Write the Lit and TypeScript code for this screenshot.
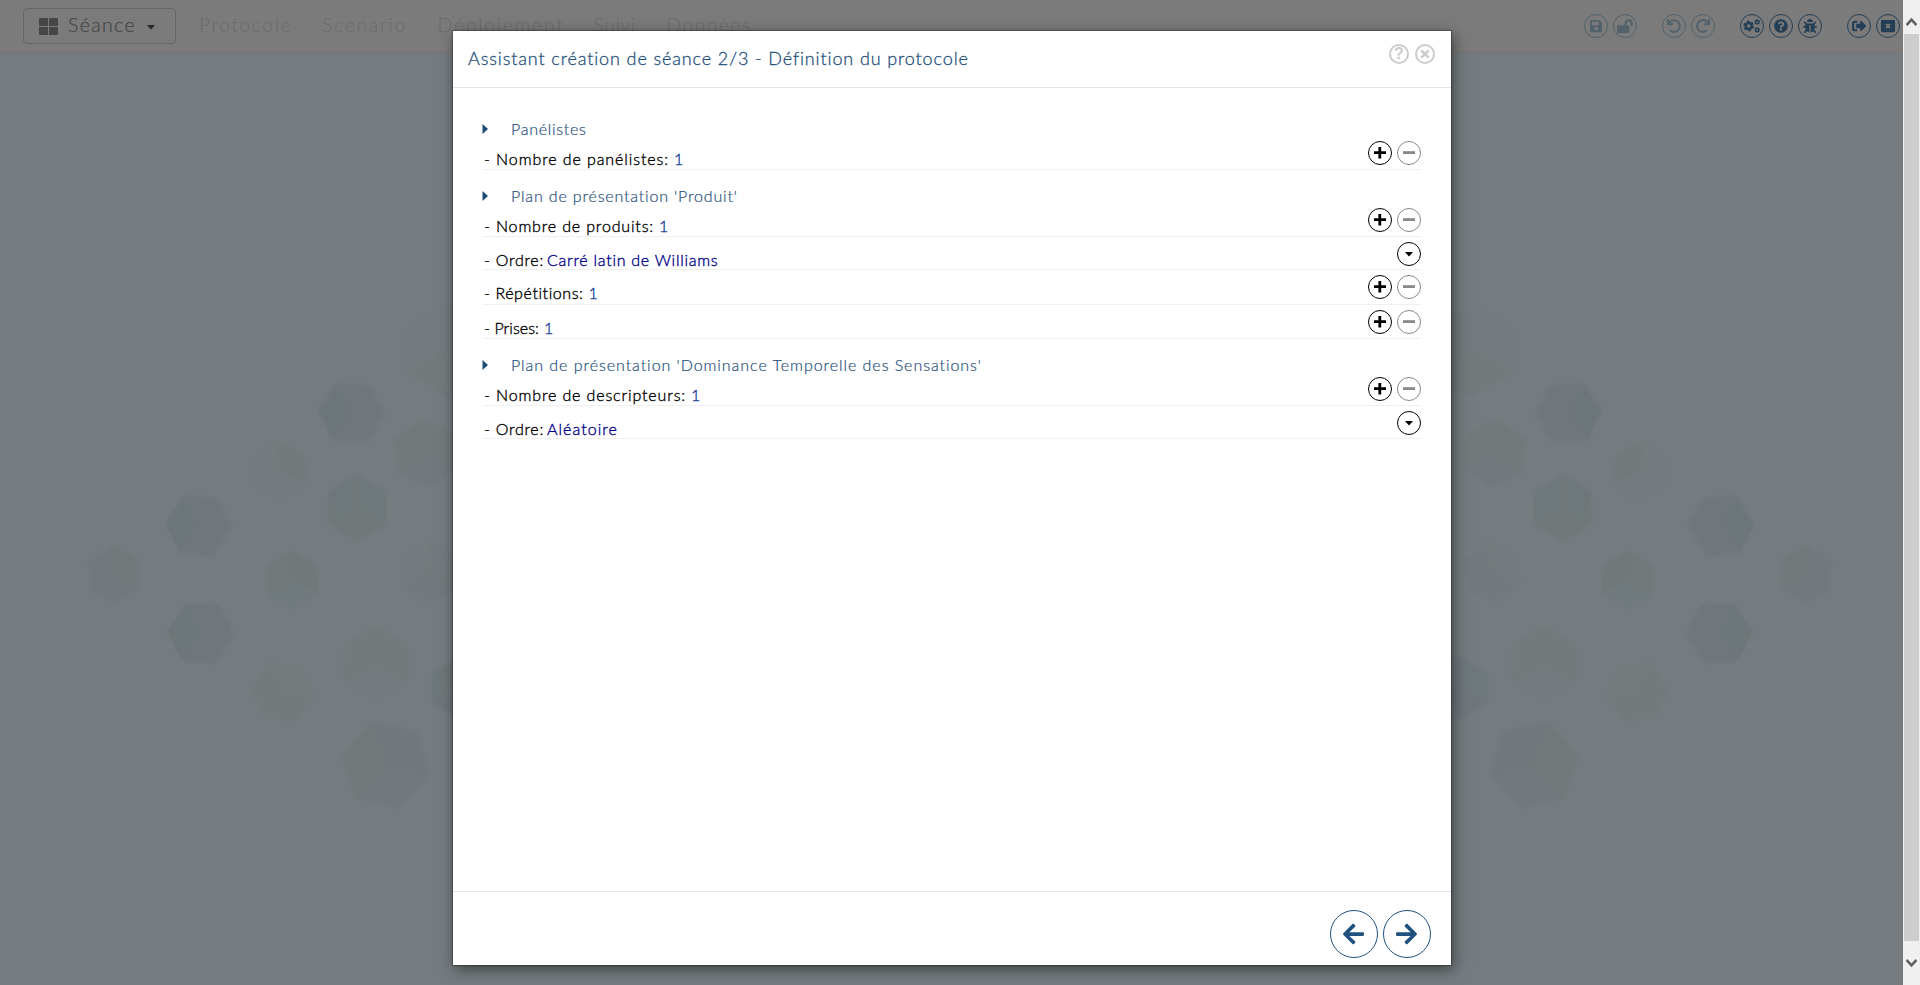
import { LitElement, html, svg, css } from "lit";
import { customElement } from "lit/decorators.js";
import { styleMap } from "lit/directives/style-map.js";

const FAMILY = '"Century Gothic", Lato, "Liberation Sans", sans-serif';
const pen = document.createElement("canvas").getContext("2d")!;

/** Letter spacing that makes a label take the given width. */
function tracked(text: string, size: number, width: number, weight = 400) {
  pen.font = `${weight} ${size}px ${FAMILY}`;
  const spacing = (width - pen.measureText(text).width) / text.length;
  return styleMap({ letterSpacing: `${spacing.toFixed(3)}px` });
}

const fa = (d: string, w = 512) => svg`<svg class="fa" viewBox="0 0 ${w} 512"><path fill="currentColor" d=${d}/></svg>`;

const UNDO = "M212.333 224.333H12c-6.627 0-12-5.373-12-12V12C0 5.373 5.373 0 12 0h48c6.627 0 12 5.373 12 12v78.112C117.773 39.279 184.26 7.47 258.175 8.007c136.906.994 246.448 111.623 246.157 248.532C504.041 393.258 393.12 504 256.333 504c-64.089 0-122.496-24.313-166.51-64.215-5.099-4.622-5.334-12.554-.467-17.42l33.967-33.967c4.474-4.474 11.662-4.717 16.401-.525C170.76 415.336 211.58 432 256.333 432c97.268 0 176-78.716 176-176 0-97.267-78.716-176-176-176-58.496 0-110.28 28.476-142.274 72.333h98.274c6.627 0 12 5.373 12 12v48c0 6.627-5.373 12-12 12z";
const ARROW = "M257.5 445.1l-22.2 22.2c-9.4 9.4-24.6 9.4-33.9 0L7 273c-9.4-9.4-9.4-24.6 0-33.9L201.4 44.7c9.4-9.4 24.6-9.4 33.9 0l22.2 22.2c9.5 9.5 9.3 25-.4 34.3L136.6 216H424c13.3 0 24 10.7 24 24v32c0 13.3-10.7 24-24 24H136.6l120.5 114.8c9.8 9.3 10 24.8.4 34.3z";

const icons = {
  save: fa("M433.941 129.941l-83.882-83.882A48 48 0 0 0 316.118 32H48C21.49 32 0 53.49 0 80v352c0 26.51 21.49 48 48 48h352c26.51 0 48-21.49 48-48V163.882a48 48 0 0 0-14.059-33.941zM224 416c-35.346 0-64-28.654-64-64 0-35.346 28.654-64 64-64s64 28.654 64 64c0 35.346-28.654 64-64 64zm96-304.52V212c0 6.627-5.373 12-12 12H76c-6.627 0-12-5.373-12-12V108c0-6.627 5.373-12 12-12h228.52c3.183 0 6.235 1.264 8.485 3.515l3.48 3.48A11.996 11.996 0 0 1 320 111.48z", 448),
  unlock: fa("M423.5 0C339.5.3 272 69.5 272 153.5V224H48c-26.5 0-48 21.5-48 48v192c0 26.5 21.5 48 48 48h352c26.5 0 48-21.5 48-48V272c0-26.5-21.5-48-48-48h-48v-71.1c0-39.6 31.7-72.5 71.3-72.9 40-.4 72.7 32.1 72.7 72v80c0 13.3 10.7 24 24 24h32c13.3 0 24-10.7 24-24v-80C576 68 507.5-.3 423.5 0z", 576),
  undo: fa(UNDO),
  redo: svg`<svg class="fa" viewBox="0 0 512 512"><path fill="currentColor" transform="translate(512 0) scale(-1 1)" d=${UNDO}/></svg>`,
  cogs: svg`<svg class="fa" viewBox="0 0 640 512"><g fill="none" stroke="currentColor"><circle cx="208" cy="256" r="108" stroke-width="88"/><circle cx="208" cy="256" r="168" stroke-width="60" stroke-dasharray="98 78"/><circle cx="520" cy="112" r="58" stroke-width="54"/><circle cx="520" cy="112" r="92" stroke-width="34" stroke-dasharray="48 48.3"/><circle cx="520" cy="400" r="58" stroke-width="54"/><circle cx="520" cy="400" r="92" stroke-width="34" stroke-dasharray="48 48.3"/></g></svg>`,
  help: fa("M504 256c0 136.997-111.043 248-248 248S8 392.997 8 256C8 119.083 119.043 8 256 8s248 111.083 248 248zM262.655 90c-54.497 0-89.255 22.957-116.549 63.758-3.536 5.286-2.353 12.415 2.715 16.258l34.699 26.31c5.205 3.947 12.621 3.008 16.665-2.122 17.864-22.658 30.113-35.797 57.303-35.797 20.429 0 45.698 13.148 45.698 32.958 0 14.976-12.363 22.667-32.534 33.976C247.128 238.528 216 254.941 216 296v4c0 6.627 5.373 12 12 12h56c6.627 0 12-5.373 12-12v-1.333c0-28.462 83.186-29.647 83.186-106.667 0-58.002-60.165-102-116.531-102zM256 338c-25.365 0-46 20.635-46 46 0 25.364 20.635 46 46 46s46-20.636 46-46c0-25.365-20.635-46-46-46z"),
  bug: fa("M511.988 288.9c-.478 17.43-15.217 31.1-32.653 31.1H424v16c0 21.864-4.882 42.584-13.6 61.145l60.228 60.228c12.496 12.497 12.496 32.758 0 45.255-12.498 12.497-32.759 12.496-45.256 0l-54.736-54.736C345.886 467.965 314.351 480 280 480V236c0-6.627-5.373-12-12-12h-24c-6.627 0-12 5.373-12 12v244c-34.351 0-65.886-12.035-90.636-32.108l-54.736 54.736c-12.498 12.497-32.759 12.496-45.256 0-12.496-12.497-12.496-32.758 0-45.255l60.228-60.228C92.882 378.584 88 357.864 88 336v-16H32.666C15.23 320 .491 306.33.013 288.9-.484 270.816 14.028 256 32 256h56v-58.745l-46.628-46.628c-12.496-12.497-12.496-32.758 0-45.255 12.498-12.497 32.758-12.497 45.256 0L141.255 160h229.489l54.627-54.627c12.498-12.497 32.758-12.497 45.256 0 12.496 12.497 12.496 32.758 0 45.255L424 197.255V256h56c17.972 0 32.484 14.816 31.988 32.9zM257 0c-61.856 0-112 50.144-112 112h224C369 50.144 318.856 0 257 0z"),
  exit: fa("M192 64v72H104c-18 0-24 8-24 24v192c0 16 6 24 24 24h88v72H96C40 448 0 408 0 352V160C0 104 40 64 96 64zM300 88c0-22 24-32 40-16l160 160c14 14 14 34 0 48L340 440c-16 16-40 6-40-16v-88H176c-14 0-24-10-24-24V200c0-14 10-24 24-24h124z"),
  close: svg`<svg class="fa" viewBox="0 0 512 512"><path fill="currentColor" fill-rule="evenodd" d="M48 32h416q48 0 48 48v352q0 48-48 48H48q-48 0-48-48V80q0-48 48-48zM160 204l52 52-52 52 44 44 52-52 52 52 44-44-52-52 52-52-44-44-52 52-52-52z"/></svg>`,
  left: fa(ARROW, 448),
  right: svg`<svg class="fa" viewBox="0 0 448 512"><path fill="currentColor" transform="translate(448 0) scale(-1 1)" d=${ARROW}/></svg>`,
  plus: svg`<svg class="sign" viewBox="0 0 12 12"><path d="M0 5.6h12M5.8 0v11.4" stroke="currentColor" stroke-width="2.8"/></svg>`,
  minus: svg`<svg class="sign" viewBox="0 0 12 12"><path d="M0 5.6h12" stroke="currentColor" stroke-width="2.8"/></svg>`,
  caret: svg`<svg class="caret" viewBox="0 0 8 5"><path d="M0 0h8L4 4.6z" fill="currentColor"/></svg>`,
};

/** Faceted hexagons of the left half of the backdrop; the right half mirrors them. */
const HEXES = [
  { x: 351.5, y: 413, r: 33, turn: 4, tones: ["#6f777b", "#6d7678", "#6f777c"] },
  { x: 199, y: 525.5, r: 33, turn: 4, tones: ["#6f777b", "#6d7678", "#6f777c"] },
  { x: 201, y: 633.5, r: 33, turn: 4, tones: ["#6f777b", "#6d7678", "#6f777c"] },
  { x: 357.5, y: 508, r: 33, turn: 30, tones: ["#70787a", "#6e7779", "#6e7779"] },
  { x: 114, y: 574, r: 28, turn: 26, tones: ["#71797c", "#72797c", "#72797b"] },
  { x: 292, y: 580, r: 29, turn: 26, tones: ["#717a7c", "#71797b", "#70787a"] },
  { x: 280, y: 471, r: 29, turn: 22, tones: ["#747a7d", "#747a7d", "#72797b"] },
  { x: 426, y: 453, r: 34, turn: 24, tones: ["#71797c", "#72797b", "#71797b"] },
  { x: 428, y: 572, r: 30, turn: 34, tones: ["#73797c", "#747a7d", "#73797c"] },
  { x: 376, y: 663, r: 36, turn: 30, tones: ["#747a7d", "#727a7c", "#727a7c"] },
  { x: 283, y: 692, r: 31, turn: 4, tones: ["#737a7c", "#737a7c", "#747b7d"] },
  { x: 386, y: 765, r: 45, turn: 12, tones: ["#71797c", "#71797b", "#70787b"] },
  { x: 448, y: 350, r: 46, turn: 30, tones: ["#727a7c", "#747a7d", "#73797c"] },
  { x: 458, y: 688, r: 30, turn: 30, tones: ["#6f777b", "#6e7779", "#6f777c"] },
];

function hexagon({ x, y, r, turn, tones }: (typeof HEXES)[number]) {
  const at = (i: number) => {
    const a = ((turn + i * 60) * Math.PI) / 180;
    return `${(x + r * Math.cos(a)).toFixed(1)},${(y + r * Math.sin(a)).toFixed(1)}`;
  };
  return tones.map((tone, k) => svg`<polygon fill=${tone} points="${x},${y} ${at(2 * k)} ${at(1 + 2 * k)} ${at(2 + 2 * k)}"/>`);
}

const NAV = [
  { text: "Protocole", width: 93, slot: 123 },
  { text: "Scenario", width: 85, slot: 115.5 },
  { text: "Déploiement", width: 127, slot: 156 },
  { text: "Suivi", width: 42, slot: 73 },
  { text: "Données", width: 85, slot: 90 },
];

const SECTIONS = [
  { title: "Panélistes", width: 75.5, rows: [{ label: "- Nombre de panélistes:", width: 185, value: "1", height: 29 }] },
  {
    title: "Plan de présentation 'Produit'", width: 227,
    rows: [
      { label: "- Nombre de produits:", width: 170, value: "1", height: 29 },
      { label: "- Ordre:", width: 60, choice: "Carré latin de Williams", choiceWidth: 172, height: 28 },
      { label: "- Répétitions:", width: 100, value: "1", height: 30 },
      { label: "- Prises:", width: 55, value: "1", height: 29 },
    ],
  },
  {
    title: "Plan de présentation 'Dominance Temporelle des Sensations'", width: 472,
    rows: [
      { label: "- Nombre de descripteurs:", width: 202, value: "1", height: 29 },
      { label: "- Ordre:", width: 60, choice: "Aléatoire", choiceWidth: 71, height: 28 },
    ],
  },
];

@customElement("app-root")
export class AppRoot extends LitElement {
  static styles = css`
    :host { display: grid; grid-template-columns: 1fr 17px; height: 985px; overflow: hidden; position: relative;
      font-family: "Century Gothic", Lato, "Liberation Sans", sans-serif; }
    * { box-sizing: border-box; }
    svg { display: block; }
    .page { background: #757b7f; overflow: hidden; position: relative; }
    .hexes { position: absolute; left: 0; top: 0; }
    .soft { filter: blur(1px); }
    .top { position: relative; display: flex; height: 53px; padding: 8px 3px 0 23px; background: #7b7b7b; border-bottom: 1px solid #777473; }
    .menu { display: flex; align-items: center; width: 153px; height: 36px; padding: 0 19px 0 15px; border: 1px solid #656565; border-radius: 4px; color: #464646; font-size: 19.5px; font-weight: 300; -webkit-text-stroke: .2px; }
    .menu span { margin: 0 auto 0 10px; line-height: 24px; padding-bottom: 2px; white-space: nowrap; }
    .menu .caret { color: #262626; margin-top: 3px; margin-right: 1px; }
    .nav { display: flex; padding: 0 0 0 23px; color: #6c6a6a; font-size: 19.5px; font-weight: 300; line-height: 33px; white-space: nowrap; }
    .tools { display: flex; gap: 25px; margin-left: auto; padding-top: 6px; }
    .set { display: flex; gap: 5px; }
    .round { display: grid; place-items: center; width: 24px; height: 24px; border: 1px solid currentColor; border-radius: 50%; color: #243f55; }
    .round .fa { height: 14px; }
    .faded { color: #53616b; }
    .modal { position: absolute; left: 453px; top: 31px; width: 998px; height: 934px; display: flex; flex-direction: column; background: #fff; box-shadow: 0 0 1px 1px rgba(0,0,0,.25), 2px 4px 14px rgba(0,0,0,.5); }
    .head { display: flex; justify-content: space-between; height: 57px; padding: 13px 16px 0 15px; border-bottom: 1px solid #e5e5e5; flex: none; }
    .title { color: #1f4f7b; font-size: 18px; line-height: 29px; white-space: nowrap; font-weight: 300; -webkit-text-stroke: .3px; }
    .marks { display: flex; gap: 6px; }
    .mark { display: grid; place-items: center; width: 20px; height: 20px; border: 2px solid #ccc; border-radius: 50%; color: #ccc; font: bold 16px/16px "Liberation Sans", sans-serif; }
    .body { flex: 1; padding: 15px 30px 0; }
    .section-title { display: flex; align-items: flex-start; height: 38px; color: #1f4f7b; font-size: 16px; font-weight: 300; white-space: nowrap; -webkit-text-stroke: .2px; }
    .section-title span { margin-left: 23px; line-height: 20px; padding-top: 16px; }
    .section-title .tri { margin: 21px 0 0 -1px; color: #1c4d77; }
    .rows { display: grid; gap: 5px; }
    .row { display: flex; gap: 5px; border-bottom: 1px solid #f0f0f0; font-size: 16px; font-weight: 300; white-space: nowrap; -webkit-text-stroke: .35px; }
    .label { color: #000; line-height: 20px; padding: 8px 0 0 1px; height: 24px; }
    .value { color: #143c94; line-height: 20px; padding: 8px 0 0 0; margin-right: auto; height: 24px; }
    .choice { color: #00008b; margin-left: -2px; }
    .ctl { color: #000; }
    .off { color: #888; }
    .sign { width: 12px; height: 12px; }
    .caret { width: 8px; height: 5px; }
    .foot { display: flex; justify-content: flex-end; gap: 5px; height: 74px; padding: 18px 20px 0; border-top: 1px solid #e5e5e5; flex: none; }
    .step { display: grid; place-items: center; width: 48px; height: 48px; border: 1px solid #1f527f; border-radius: 50%; color: #1f527f; }
    .step .fa { height: 24px; margin-right: 1px; }
    .bar { display: flex; flex-direction: column; background: #f0f0f0; color: #606060; padding: 17px 1px 0; }
    .thumb { height: 907px; background: #cdcdcd; margin: 8px 0 18px; }
    .arrow { margin: 0 auto 0 2px; }
  `;

  private round(icon: unknown, tone = "") {
    return html`<div class="round ${tone}">${icon}</div>`;
  }

  render() {
    return html`
      <div class="page">
        <svg class="hexes" width="1903" height="985"><g class="soft">${HEXES.map(hexagon)}</g><g class="soft" transform="translate(1920 0) scale(-1 1)">${HEXES.map(hexagon)}</g></svg>
        <div class="top">
          <div class="menu">
            <svg width="19" height="17" viewBox="0 0 19 17"><path fill="currentColor" d="M0 1q0-1 1-1h8v8H0zM10 0h8q1 0 1 1v7h-9zM0 9h9v8H1q-1 0-1-1zM10 9h9v7q0 1-1 1h-8z"/></svg>
            <span style=${tracked("Séance", 19.5, 68, 300)}>Séance</span>${icons.caret}
          </div>
          <div class="nav">${NAV.map((n) => html`<div style=${styleMap({ width: `${n.slot}px` })}><span style=${tracked(n.text, 19.5, n.width, 300)}>${n.text}</span></div>`)}</div>
          <div class="tools">
            <div class="set">${this.round(icons.save, "faded")}${this.round(icons.unlock, "faded")}</div>
            <div class="set">${this.round(icons.undo, "faded")}${this.round(icons.redo, "faded")}</div>
            <div class="set">${this.round(icons.cogs)}${this.round(icons.help)}${this.round(icons.bug)}</div>
            <div class="set">${this.round(icons.exit)}${this.round(icons.close)}</div>
          </div>
        </div>
      </div>
      <div class="bar">
        <svg class="arrow" width="11" height="9" viewBox="0 0 11 9"><path d="M.5 8L5.5 2.6l5 5.4" fill="none" stroke="currentColor" stroke-width="2.6"/></svg>
        <div class="thumb"></div>
        <svg class="arrow" width="11" height="9" viewBox="0 0 11 9"><path d="M.5 1l5 5.4 5-5.4" fill="none" stroke="currentColor" stroke-width="2.6"/></svg>
      </div>
      <div class="modal">
        <div class="head">
          <div class="title" style=${tracked("Assistant création de séance 2/3 - Définition du protocole", 18, 501, 300)}>Assistant création de séance 2/3 - Définition du protocole</div>
          <div class="marks">
            <div class="mark">?</div>
            <div class="mark"><svg width="10" height="10" viewBox="0 0 10 10"><path d="M1.3 1.3l7.4 7.4M8.7 1.3L1.3 8.7" stroke="currentColor" stroke-width="2.6"/></svg></div>
          </div>
        </div>
        <div class="body">
          ${SECTIONS.map((s) => html`
            <div class="section-title">
              <svg class="tri" width="6" height="10" viewBox="0 0 6 10"><path d="M.5 0L6 5 .5 10z" fill="currentColor"/></svg>
              <span style=${tracked(s.title, 16, s.width, 300)}>${s.title}</span>
            </div>
            <div class="rows">${s.rows.map((r: any) => html`
              <div class="row" style=${styleMap({ height: `${r.height}px` })}>
                <div class="label" style=${tracked(r.label, 16, r.width, 300)}>${r.label}</div>
                ${r.choice
                  ? html`<div class="value choice" style=${tracked(r.choice, 16, r.choiceWidth, 300)}>${r.choice}</div>${this.round(icons.caret, "ctl")}`
                  : html`<div class="value">${r.value}</div>${this.round(icons.plus, "ctl")}${this.round(icons.minus, "off")}`}
              </div>`)}</div>`)}
        </div>
        <div class="foot"><div class="step">${icons.left}</div><div class="step">${icons.right}</div></div>
      </div>`;
  }
}
